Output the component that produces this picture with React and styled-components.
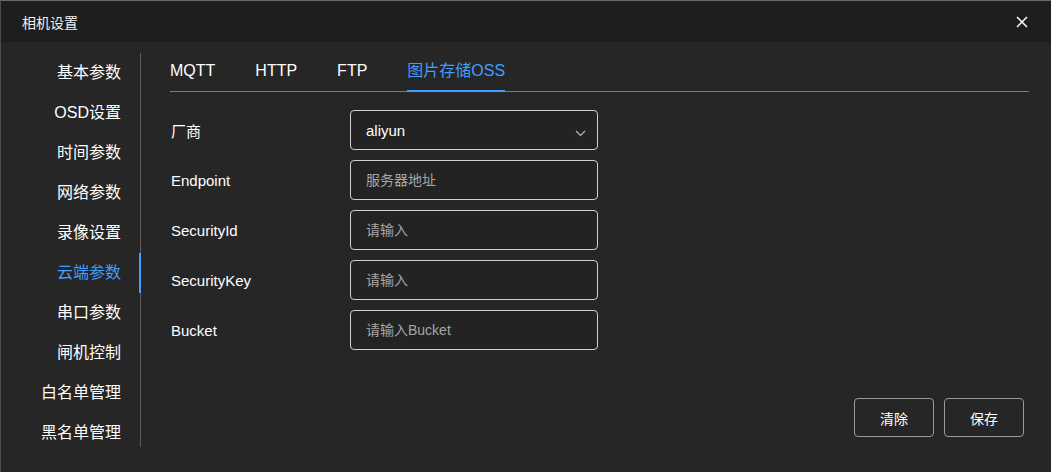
import React, { useState } from "react";
import styled, { createGlobalStyle } from "styled-components";

const GlobalStyle = createGlobalStyle`
    html, body {
        margin: 0;
        padding: 0;
        background: #262626;
    }
    * {
        box-sizing: border-box;
    }
`;

const Dialog = styled.div`
    display: flex;
    flex-direction: column;
    width: 1051px;
    height: 472px;
    background-color: #262626;
    border-top: 1px solid #6a6a6a;
    border-left: 1px solid #4a4a4a;
    font-family: "Liberation Sans", "Noto Sans CJK SC", sans-serif;
    color: #ffffff;
    overflow: hidden;
`;

const Header = styled.div`
    display: flex;
    align-items: center;
    justify-content: space-between;
    height: 41px;
    padding: 0 22px 0 21px;
    background-color: #1e1e1e;
`;

const Title = styled.span`
    font-size: 14px;
    color: #f2f2f2;
`;

const CloseButton = styled.button`
    display: flex;
    align-items: center;
    justify-content: center;
    width: 14px;
    height: 14px;
    padding: 0;
    border: none;
    background: transparent;
    cursor: pointer;
`;

const Body = styled.div`
    display: flex;
    flex: 1;
    flex-direction: row;
`;

const Sidebar = styled.div`
    display: flex;
    flex-direction: column;
    width: 140px;
    margin-top: 11px;
    height: 394px;
    border-right: 1px solid #5e5e5e;
`;

const SideItem = styled.div`
    ${props => `
        height: 40px;
        line-height: 40px;
        padding-right: 18px;
        margin-right: -1px;
        text-align: right;
        font-size: 16px;
        cursor: pointer;
        color: ${props.active ? "#409eff" : "#ffffff"};
        border-right: 2px solid ${props.active ? "#409eff" : "transparent"};
    `}
`;

const Content = styled.div`
    display: flex;
    flex: 1;
    flex-direction: column;
    padding: 9px 22px 35px 29px;
`;

const TabBar = styled.div`
    display: flex;
    flex-direction: row;
    height: 41px;
    border-bottom: 1px solid #7a7a7a;
`;

const Tab = styled.div`
    ${props => `
        position: relative;
        height: 40px;
        line-height: 40px;
        margin-right: 40px;
        font-size: 16px;
        cursor: pointer;
        color: ${props.active ? "#409eff" : "#ffffff"};
        &::after {
            content: "";
            position: absolute;
            left: 0;
            right: 0;
            bottom: -1px;
            height: 2px;
            background-color: ${props.active ? "#409eff" : "transparent"};
        }
    `}
`;

const Form = styled.div`
    display: flex;
    flex-direction: column;
    gap: 10px;
    margin-top: 18px;
`;

const Row = styled.div`
    display: flex;
    flex-direction: row;
    align-items: center;
    height: 40px;
`;

const Label = styled.label`
    width: 180px;
    padding-left: 1px;
    font-size: 15px;
    color: #ffffff;
`;

const Field = styled.div`
    display: flex;
    align-items: center;
    justify-content: space-between;
    width: 248px;
    height: 40px;
    padding: 0 11px 0 15px;
    border: 1px solid #d0d0d0;
    border-radius: 4px;
    background-color: #232323;
`;

const Input = styled.input`
    width: 100%;
    border: none;
    outline: none;
    padding: 0;
    background: transparent;
    font-family: "Liberation Sans", "Noto Sans CJK SC", sans-serif;
    font-size: 14px;
    color: #ffffff;
    &::placeholder {
        color: #a6a6a6;
    }
`;

const SelectValue = styled.span`
    font-size: 15px;
    color: #ffffff;
`;

const Chevron = styled.svg`
    margin-top: 7px;
`;

const Footer = styled.div`
    display: flex;
    justify-content: flex-end;
    gap: 10px;
    margin-top: auto;
    padding-right: 5px;
`;

const Button = styled.button`
    width: 80px;
    height: 39px;
    border: 1px solid #9a9a9a;
    border-radius: 4px;
    background-color: #262626;
    font-family: "Liberation Sans", "Noto Sans CJK SC", sans-serif;
    font-size: 14px;
    color: #ffffff;
    cursor: pointer;
`;

const menu = ["基本参数", "OSD设置", "时间参数", "网络参数", "录像设置", "云端参数", "串口参数", "闸机控制", "白名单管理", "黑名单管理"];
const tabs = ["MQTT", "HTTP", "FTP", "图片存储OSS"];
const fields = [
    { label: "Endpoint", placeholder: "服务器地址" },
    { label: "SecurityId", placeholder: "请输入" },
    { label: "SecurityKey", placeholder: "请输入" },
    { label: "Bucket", placeholder: "请输入Bucket" },
];

const App = () => {
    const [menuIndex, setMenuIndex] = useState(5);
    const [tabIndex, setTabIndex] = useState(3);

    return (
        <>
            <GlobalStyle />
            <Dialog>
                <Header>
                    <Title>相机设置</Title>
                    <CloseButton>
                        <svg width="12" height="12" viewBox="0 0 12 12">
                            <path d="M1 1L11 11M11 1L1 11" stroke="#ffffff" strokeWidth="1.5" />
                        </svg>
                    </CloseButton>
                </Header>
                <Body>
                    <Sidebar>
                        {menu.map((item, i) => (
                            <SideItem key={item} active={i === menuIndex} onClick={() => setMenuIndex(i)}>
                                {item}
                            </SideItem>
                        ))}
                    </Sidebar>
                    <Content>
                        <TabBar>
                            {tabs.map((tab, i) => (
                                <Tab key={tab} active={i === tabIndex} onClick={() => setTabIndex(i)}>
                                    {tab}
                                </Tab>
                            ))}
                        </TabBar>
                        <Form>
                            <Row>
                                <Label>厂商</Label>
                                <Field>
                                    <SelectValue>aliyun</SelectValue>
                                    <Chevron width="11" height="7" viewBox="0 0 11 7">
                                        <path d="M1 1L5.5 5.5L10 1" fill="none" stroke="#b8b8b8" strokeWidth="1.2" />
                                    </Chevron>
                                </Field>
                            </Row>
                            {fields.map(f => (
                                <Row key={f.label}>
                                    <Label>{f.label}</Label>
                                    <Field>
                                        <Input placeholder={f.placeholder} />
                                    </Field>
                                </Row>
                            ))}
                        </Form>
                        <Footer>
                            <Button>清除</Button>
                            <Button>保存</Button>
                        </Footer>
                    </Content>
                </Body>
            </Dialog>
        </>
    );
};

export default App;
